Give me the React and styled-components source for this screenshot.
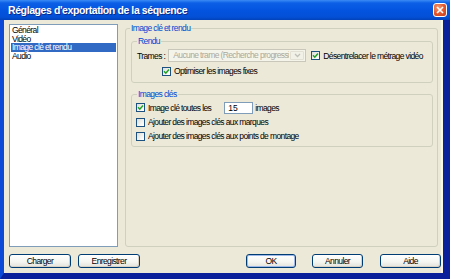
import React from "react";
import styled, { createGlobalStyle } from "styled-components";

const GlobalStyle = createGlobalStyle`
  html, body {
    margin: 0;
    padding: 0;
    background: #ece9d8;
  }
  * {
    box-sizing: border-box;
  }
`;

const uiFont = `"Liberation Sans", Arial, sans-serif`;

const Window = styled.div`
  width: 450px;
  height: 279px;
  display: flex;
  flex-direction: column;
  background: #0a3fd0;
  font-family: ${uiFont};
  font-size: 8.5px;
  letter-spacing: -0.62px;
  color: #000;
  overflow: hidden;
`;

const TitleBar = styled.div`
  height: 20px;
  flex: none;
  display: flex;
  align-items: center;
  justify-content: space-between;
  padding: 0 3px 0 8px;
  background: linear-gradient(
    to bottom,
    #3b8cf5 0%,
    #0d5fe6 15%,
    #0454e0 50%,
    #0350d6 85%,
    #0242b8 100%
  );
`;

const Title = styled.span`
  color: #fff;
  font-weight: bold;
  font-size: 10.5px;
  letter-spacing: -0.4px;
  text-shadow: 1px 1px 0 #0b2a8c;
`;

const CloseButton = styled.div`
  width: 14px;
  height: 14px;
  border: 1px solid #fff;
  border-radius: 3px;
  background: radial-gradient(circle at 35% 30%, #f39a72 0%, #e2552a 55%, #c2401b 100%);
  display: flex;
  align-items: center;
  justify-content: center;
`;

const Frame = styled.div`
  flex: 1;
  min-height: 0;
  display: flex;
  border-left: 4px solid #0b49d6;
  border-right: 7px solid #0a1f9a;
  border-bottom: 6px solid #0a1f9a;
`;

const Client = styled.div`
  flex: 1;
  min-width: 0;
  display: flex;
  flex-direction: column;
  background: #ece9d8;
  border-right: 2px solid #f8f5e6;
  padding: 4px 3px 0 5px;
`;

const Main = styled.div`
  height: 223px;
  display: flex;
  gap: 7px;
`;

const List = styled.ul`
  width: 109px;
  flex: none;
  margin: 0;
  padding: 1px 1px 0 1px;
  list-style: none;
  background: #fff;
  border: 1px solid #7f9db9;
`;

const ListItem = styled.li`
  height: 8.5px;
  line-height: 8.5px;
  padding-left: 1px;
  white-space: nowrap;
  background: ${(p) => (p.$selected ? "#316ac5" : "transparent")};
  color: ${(p) => (p.$selected ? "#fff" : "#000")};
`;

const Group = styled.fieldset`
  margin: 0;
  padding: ${(p) => p.$pad};
  border: 1px solid #d0d0bf;
  border-radius: 3px;
  min-width: 0;
  flex: ${(p) => (p.$fill ? 1 : "none")};
  display: flex;
  flex-direction: column;
  gap: ${(p) => p.$gap || "0px"};
  overflow: hidden;
`;

const Legend = styled.legend`
  color: #0046d5;
  padding: 0 1px;
  margin-left: ${(p) => p.$indent || "0px"};
  line-height: 9px;
`;

const Row = styled.div`
  display: flex;
  align-items: center;
  height: ${(p) => p.$h || "14px"};
  padding-left: ${(p) => p.$indent || "0px"};
  white-space: nowrap;
`;

const Label = styled.span`
  margin-left: ${(p) => p.$ml || "0px"};
`;

const Combo = styled.div`
  width: 138px;
  height: 13px;
  display: flex;
  align-items: stretch;
  border: 1px solid #c9c7ba;
  background: #f5f4ea;
  color: #aca899;
  margin: 0 5px 0 3px;
`;

const ComboText = styled.span`
  flex: 1;
  padding-left: 4px;
  line-height: 11px;
  overflow: hidden;
  white-space: nowrap;
`;

const ComboArrow = styled.span`
  width: 14px;
  margin: 1px;
  display: flex;
  align-items: center;
  justify-content: center;
  border: 1px solid #e2e0d4;
  border-radius: 1px;
  background: #f2f1e8;
`;

const Box = styled.span`
  width: 9px;
  height: 9px;
  flex: none;
  border: 1px solid #1c5180;
  background: linear-gradient(135deg, #dcdcd7 0%, #fff 90%);
  display: flex;
  align-items: center;
  justify-content: center;
  margin-right: 3px;
`;

const TextInput = styled.div`
  width: 29px;
  height: 12px;
  border: 1px solid #7f9db9;
  background: #fff;
  padding-left: 3px;
  line-height: 10px;
  letter-spacing: 0;
  margin: 0 2px 0 13px;
`;

const Bottom = styled.div`
  display: flex;
  align-items: center;
  margin-top: 7px;
  margin-right: -3px;
`;

const Button = styled.div`
  width: ${(p) => p.$w || "62px"};
  height: 14px;
  margin-left: ${(p) => p.$ml || "0px"};
  border: 1px solid #003c74;
  border-radius: 3px;
  background: linear-gradient(to bottom, #ffffff 0%, #f4f4f0 60%, #e3e2da 100%);
  box-shadow: ${(p) =>
    p.$default ? "inset 0 0 0 1px #9cb7e8" : "inset -1px -1px 0 #d6d0c5"};
  display: flex;
  align-items: center;
  justify-content: center;
  line-height: 12px;
`;

const Spacer = styled.div`
  flex: 1;
`;

const Check = ({ checked }) => (
  <Box>
    {checked && (
      <svg width="7" height="7" viewBox="0 0 7 7">
        <path d="M1 3.3 L2.8 5.2 L6 1.6" fill="none" stroke="#21a121" strokeWidth="1.5" />
      </svg>
    )}
  </Box>
);

export default function App() {
  return (
    <>
      <GlobalStyle />
      <Window>
        <TitleBar>
          <Title>Réglages d'exportation de la séquence</Title>
          <CloseButton>
            <svg width="8" height="8" viewBox="0 0 8 8">
              <path d="M1 1 L7 7 M7 1 L1 7" stroke="#fff" strokeWidth="1.6" />
            </svg>
          </CloseButton>
        </TitleBar>
        <Frame>
          <Client>
            <Main>
              <List>
                <ListItem>Général</ListItem>
                <ListItem>Vidéo</ListItem>
                <ListItem $selected>Image clé et rendu</ListItem>
                <ListItem>Audio</ListItem>
              </List>
              <Group $fill $pad="4px 4px 5px 5px" $gap="7px">
                <Legend $indent="-1px">Image clé et rendu</Legend>
                <Group $pad="2px 4px 3px 4px">
                  <Legend $indent="1px">Rendu</Legend>
                  <Row $h="15px">
                    <Label $ml="1px">Trames :</Label>
                    <Combo>
                      <ComboText>Aucune trame (Recherche progressive)</ComboText>
                      <ComboArrow>
                        <svg width="7" height="5" viewBox="0 0 7 5">
                          <path d="M1 1 L3.5 3.5 L6 1" fill="none" stroke="#c0bfb8" strokeWidth="1.3" />
                        </svg>
                      </ComboArrow>
                    </Combo>
                    <Check checked />
                    <Label>Désentrelacer le métrage vidéo</Label>
                  </Row>
                  <Row $h="16px" $indent="26px">
                    <Check checked />
                    <Label>Optimiser les images fixes</Label>
                  </Row>
                </Group>
                <Group $pad="1px 4px 3px 4px">
                  <Legend $indent="1px">Images clés</Legend>
                  <Row $h="15px">
                    <Check checked />
                    <Label>Image clé toutes les</Label>
                    <TextInput>15</TextInput>
                    <Label>images</Label>
                  </Row>
                  <Row>
                    <Check />
                    <Label>Ajouter des images clés aux marques</Label>
                  </Row>
                  <Row>
                    <Check />
                    <Label>Ajouter des images clés aux points de montage</Label>
                  </Row>
                </Group>
              </Group>
            </Main>
            <Bottom>
              <Button>Charger</Button>
              <Button $ml="7px">Enregistrer</Button>
              <Spacer />
              <Button $w="50px" $default>OK</Button>
              <Button $w="51px" $ml="16px">Annuler</Button>
              <Button $w="61px" $ml="17px">Aide</Button>
            </Bottom>
          </Client>
        </Frame>
      </Window>
    </>
  );
}
